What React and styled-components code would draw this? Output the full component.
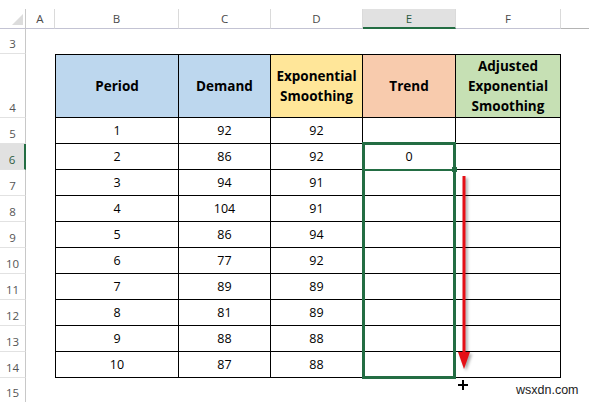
import React from 'react';
import styled, { createGlobalStyle, css } from 'styled-components';

const GREEN = '#236d43';
const COLS = '26px 29px 124px 92px 92px 93px 105px 1fr';

const Global = createGlobalStyle`
  html, body { margin: 0; padding: 0; background: #fff; overflow: hidden; }
  body { font-family: "Open Sans", "Liberation Sans", sans-serif; }
  * { box-sizing: border-box; }
`;

const Sheet = styled.div`
  display: flex;
  flex-direction: column;
  padding-top: 9px;
  width: 589px;
  height: 402px;
  overflow: hidden;
`;

const Row = styled.div`
  display: grid;
  grid-template-columns: ${COLS};
  height: ${(p) => p.$h}px;
  flex: none;
`;

const Corner = styled.div`
  position: relative;
  border-right: 1px solid #c8c8c8;
  border-bottom: 1px solid #c3c3d3;
  &::after {
    content: '';
    position: absolute;
    right: 2px;
    bottom: 3px;
    border-style: solid;
    border-width: 0 0 11px 11px;
    border-color: transparent transparent #dcdcdc transparent;
  }
`;

const ColHead = styled.div`
  display: flex;
  align-items: center;
  justify-content: center;
  font-size: 11.5px;
  color: #4a4a4a;
  border-right: 1px solid #dadada;
  border-bottom: 1px solid #c3c3d3;
  ${(p) =>
    p.$active &&
    css`
      background: #e1e1e1;
      border-bottom: 2px solid ${GREEN};
      color: #2d5c41;
    `}
  ${(p) =>
    p.$tail &&
    css`
      border-right: none;
      border-bottom-color: #b4b4b4;
    `}
`;

const RowHead = styled.div`
  display: flex;
  align-items: flex-end;
  justify-content: center;
  padding-bottom: 2px;
  font-size: 11.5px;
  line-height: 14px;
  color: #555;
  border-right: 1px solid #c8c8c8;
  border-bottom: 1px solid #e2e2e2;
  ${(p) =>
    p.$active &&
    css`
      background: #e1e1e1;
      border-right: 2px solid ${GREEN};
      color: #2d5c41;
    `}
`;

const Blank = styled.div`
  position: relative;
`;

const Cell = styled.div`
  position: relative;
  display: flex;
  align-items: center;
  justify-content: center;
  text-align: center;
  font-size: 12.5px;
  color: #000;
  border-right: 1px solid #000;
  border-bottom: 1px solid #000;
  background: ${(p) => p.$bg || 'transparent'};
  ${(p) => p.$first && css`border-left: 1px solid #000;`}
  ${(p) => p.$top && css`border-top: 1px solid #000;`}
`;

const HeadCell = styled(Cell)`
  font-weight: 700;
  font-size: 13.5px;
  line-height: 20px;
  padding: 0 4px;
`;

const Selection = styled.div`
  position: absolute;
  left: -1px;
  top: -2px;
  width: 94px;
  height: 237px;
  border: 3px solid ${GREEN};
  pointer-events: none;
  z-index: 2;
`;

const ActiveLine = styled.div`
  position: absolute;
  left: -1px;
  top: 25px;
  width: 94px;
  height: 2px;
  background: ${GREEN};
  z-index: 2;
`;

const Handle = styled.div`
  position: absolute;
  left: 89px;
  top: 23px;
  width: 5px;
  height: 5px;
  background: ${GREEN};
  z-index: 3;
`;

const Arrow = styled.svg`
  position: absolute;
  left: 0;
  top: 4px;
  z-index: 4;
  overflow: visible;
  filter: drop-shadow(2px 2px 1.5px rgba(0, 0, 0, 0.35));
`;

const Plus = styled.svg`
  position: absolute;
  left: 2px;
  top: 2px;
  z-index: 4;
`;

const Watermark = styled.div`
  position: absolute;
  left: 60px;
  top: 5px;
  font-family: "Liberation Sans", Arial, sans-serif;
  font-size: 12.5px;
  line-height: 14px;
  color: #222;
  white-space: nowrap;
  z-index: 4;
`;

const data = [
  [1, 92, 92],
  [2, 86, 92],
  [3, 94, 91],
  [4, 104, 91],
  [5, 86, 94],
  [6, 77, 92],
  [7, 89, 89],
  [8, 81, 89],
  [9, 88, 88],
  [10, 87, 88],
];

export default function App() {
  return (
    <>
      <Global />
      <Sheet>
        <Row $h={20}>
          <Corner />
          <ColHead>A</ColHead>
          <ColHead>B</ColHead>
          <ColHead>C</ColHead>
          <ColHead>D</ColHead>
          <ColHead $active>E</ColHead>
          <ColHead>F</ColHead>
          <ColHead $tail />
        </Row>
        <Row $h={25}>
          <RowHead>3</RowHead>
        </Row>
        <Row $h={64}>
          <RowHead>4</RowHead>
          <Blank />
          <HeadCell $first $top $bg="#bdd7ee">Period</HeadCell>
          <HeadCell $top $bg="#bdd7ee">Demand</HeadCell>
          <HeadCell $top $bg="#ffe699">Exponential Smoothing</HeadCell>
          <HeadCell $top $bg="#f8cbad">Trend</HeadCell>
          <HeadCell $top $bg="#c6e0b4">Adjusted Exponential Smoothing</HeadCell>
          <Blank />
        </Row>
        {data.map(([p, d, s], i) => {
          const rowNo = i + 5;
          return (
            <Row $h={26} key={rowNo}>
              <RowHead $active={rowNo === 6}>{rowNo}</RowHead>
              <Blank />
              <Cell $first>{p}</Cell>
              <Cell>{d}</Cell>
              <Cell>{s}</Cell>
              <Cell>
                {rowNo === 6 && (
                  <>
                    0
                    <Selection />
                    <ActiveLine />
                    <Handle />
                  </>
                )}
              </Cell>
              <Cell>
                {rowNo === 7 && (
                  <Arrow width="16" height="196" viewBox="0 0 16 196">
                    <rect x="6.5" y="2" width="3" height="180" fill="#e50f16" />
                    <polygon points="2,178 14,178 8,195" fill="#e50f16" />
                  </Arrow>
                )}
              </Cell>
              <Blank />
            </Row>
          );
        })}
        <Row $h={25}>
          <RowHead>15</RowHead>
          <Blank />
          <Blank />
          <Blank />
          <Blank />
          <Blank />
          <Blank>
            <Plus width="10" height="10" viewBox="0 0 10 10">
              <path d="M5 0V10M0 5H10" stroke="#000" strokeWidth="2" />
            </Plus>
            <Watermark>wsxdn.com</Watermark>
          </Blank>
          <Blank />
        </Row>
      </Sheet>
    </>
  );
}
